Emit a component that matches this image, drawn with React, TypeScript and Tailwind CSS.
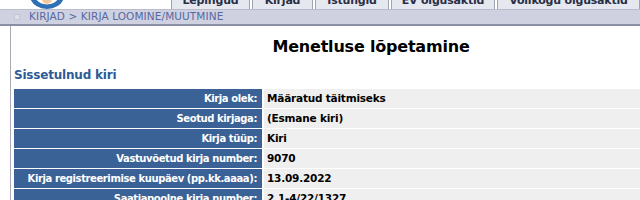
const tabs = [
  { label: "Lepingud", w: "w-[79px]" },
  { label: "Kirjad", w: "w-[61px]" },
  { label: "Istungid", w: "w-[74px]" },
  { label: "EV õigusaktid", w: "w-[104px]" },
  { label: "Volikogu õigusaktid", w: "w-[143px]" },
  { label: "Otsing", w: "w-[60px]" },
];

const rows: [string, string][] = [
  ["Kirja olek:", "Määratud täitmiseks"],
  ["Seotud kirjaga:", "(Esmane kiri)"],
  ["Kirja tüüp:", "Kiri"],
  ["Vastuvõetud kirja number:", "9070"],
  ["Kirja registreerimise kuupäev (pp.kk.aaaa):", "13.09.2022"],
  ["Saatjapoolne kirja number:", "2.1-4/22/1327"],
];

function Logo() {
  return (
    <svg width="40" height="9" viewBox="0 0 40 9" className="ml-[27px] shrink-0">
      <path d="M2 -6 Q4 8 20 9 Q36 8 38 -6 L33 -6 Q31 4 20 4.5 Q9 4 7 -6 Z" fill="#2f6fb5" />
      <circle cx="20" cy="-1" r="5" fill="#f3c79a" />
    </svg>
  );
}

export default function App() {
  return (
    <div className="w-[640px] h-[200px] overflow-hidden bg-white font-['DejaVu_Sans',Verdana,sans-serif]">
      {/* top: logo + tabs (cut off) */}
      <div className="h-[9px] flex items-end overflow-hidden">
        <Logo />
        <div className="ml-[104px] flex items-end">
          {tabs.map((t) => (
            <div
              key={t.label}
              className={`${t.w} h-[17px] shrink-0 mr-[2px] bg-[#e6e8ef] border border-b-0 border-[#9da2b4] flex items-center justify-center text-[11px] font-bold text-[#2a2f45] tracking-[-0.2px] whitespace-nowrap`}
            >
              {t.label}
            </div>
          ))}
        </div>
      </div>

      {/* breadcrumb */}
      <div className="h-[17px] bg-[#cfd1e0] border-t border-[#b9bccd] border-b-2 border-b-[#8a8fa3] flex items-center">
        <div className="ml-[14px] w-[6px] h-[6px] bg-[#dfe0ea] border border-[#c3c5d3]" />
        <span className="ml-[9px] text-[10.5px] text-[#5569a3] tracking-[0.1px]">
          KIRJAD &gt; KIRJA LOOMINE/MUUTMINE
        </span>
      </div>

      {/* content */}
      <div className="ml-[10px] border-l border-[#a7a9b3] h-[200px] pl-[3px]">
        <h1 className="pt-[11px] text-center text-[16px] font-bold text-black leading-[20px] pl-[88px] tracking-[-0.2px]">
          Menetluse lõpetamine
        </h1>
        <h2 className="mt-[11px] text-[12px] font-bold text-[#2d5b96] leading-[15px] tracking-[-0.2px]">
          Sissetulnud kiri
        </h2>
        <div className="mt-[6px] flex flex-col gap-[1px]">
          {rows.map(([k, v]) => (
            <div key={k} className="flex h-[19px] gap-[2px]">
              <div className="w-[248px] shrink-0 bg-[#3b6297] text-white text-[10px] tracking-[-0.4px] font-bold flex items-center justify-end pr-[5px] whitespace-nowrap">
                {k}
              </div>
              <div className="flex-1 bg-[#efefef] text-black text-[10.5px] tracking-[-0.2px] font-bold flex items-center pl-[3px] whitespace-nowrap">
                {v}
              </div>
            </div>
          ))}
        </div>
      </div>
    </div>
  );
}
